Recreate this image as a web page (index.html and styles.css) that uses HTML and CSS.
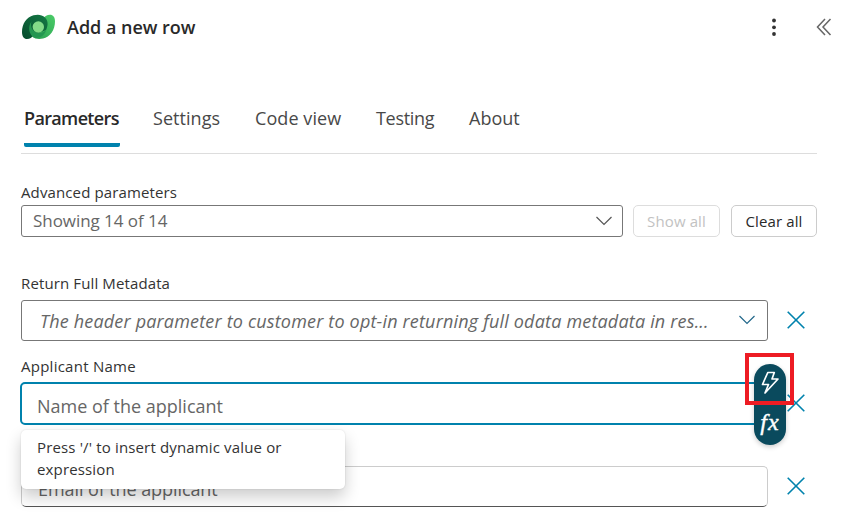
FILE: index.html
```html
<!DOCTYPE html>
<html lang="en">
<head>
<meta charset="utf-8">
<title>Add a new row</title>
<link rel="stylesheet" href="styles.css">
</head>
<body>
<main class="panel">
  <header class="header">
    <svg class="logo" width="34" height="26" viewBox="0 0 34 26">
      <defs>
        <linearGradient id="dark" x1="0" y1="1" x2="1" y2="0"><stop offset="0" stop-color="#064b2d"/><stop offset="1" stop-color="#157a45"/></linearGradient>
        <linearGradient id="light" x1="0" y1="1" x2="1" y2="0"><stop offset="0" stop-color="#289d50"/><stop offset="1" stop-color="#4bcc68"/></linearGradient>
      </defs>
      <path fill="url(#light)" d="M11 22.500C14 25 18 25.500 22 24.500C29 23 34 16 34 7.500C34 3 32 .8 29 .8C26 .8 24 2 22.500 4.500L23 13L17 18Z"/>
      <path fill="url(#dark)" d="M24 3.500C21 .6 17 0 12.500 1.300C5.500 3 1 10 1 18C1 22.500 3 25 6 25C9 25 11 23.500 12.500 21L25 16C27.500 11 27 6.500 24 3.500Z"/>
      <path fill="#249651" d="M10.500 7.500C7 12 7.500 18.500 11.500 22.500C15 26 24 23 25.500 15C24 18 20 19.500 16.500 18.700C11 17.500 9 12 10.500 7.500Z"/>
      <circle cx="17.300" cy="13" r="5.700" fill="#83db88"/>
    </svg>
    <h1 class="title">Add a new row</h1>
    <svg class="more" width="6" height="20" viewBox="0 0 6 20" fill="#333"><circle cx="3" cy="3.500" r="1.900"/><circle cx="3" cy="10.300" r="1.900"/><circle cx="3" cy="17" r="1.900"/></svg>
    <svg class="collapse" width="16" height="18" viewBox="0 0 16 18" fill="none" stroke="#666" stroke-width="1.500"><path d="M9 1L1.500 9L9 17M14.500 1L7 9L14.500 17"/></svg>
  </header>

  <nav class="tabs">
    <a class="tab active">Parameters</a>
    <a class="tab settings">Settings</a>
    <a class="tab code">Code view</a>
    <a class="tab testing">Testing</a>
    <a class="tab about">About</a>
  </nav>

  <section class="advanced">
    <div class="label label-advanced">Advanced parameters</div>
    <div class="row">
      <div class="select"><span class="showing">Showing 14 of 14</span>
        <svg width="16" height="10" viewBox="0 0 16 10" fill="none" stroke="#555" stroke-width="1.200"><path d="M.5 1L8 8.500L15.500 1"/></svg>
      </div>
      <button class="button disabled" disabled>Show all</button>
      <button class="button clear">Clear all</button>
    </div>
  </section>

  <section class="field metadata">
    <div class="label label-metadata">Return Full Metadata</div>
    <div class="row">
      <div class="box combo"><span class="hint">The header parameter to customer to opt-in returning full odata metadata in res...</span>
        <svg width="16" height="10" viewBox="0 0 16 10" fill="none" stroke="#22678a" stroke-width="1.200"><path d="M.5 1L8 8.500L15.500 1"/></svg>
      </div>
      <svg class="remove" width="18" height="18" viewBox="0 0 18 18"><path d="M.7.7L17.300 17.300M17.300.7L.7 17.300"/></svg>
    </div>
  </section>

  <section class="field applicant">
    <div class="label label-name">Applicant Name</div>
    <div class="row">
      <div class="box focused"><span class="name">Name of the applicant</span></div>
      <svg class="remove" width="18" height="18" viewBox="0 0 18 18"><path d="M.7.7L17.300 17.300M17.300.7L.7 17.300"/></svg>
    </div>
    <div class="tooltip"><span class="line-one">Press '/' to insert dynamic value or</span><br><span class="line-two">expression</span></div>
    <div class="tools">
      <svg class="bolt" width="18" height="24" viewBox="0 0 18 24" fill="none" stroke="#fff" stroke-width="1.700" stroke-linejoin="round"><path d="M6.800 1.500H13.300L11 8H17L4 22L7.500 13.500H1.500Z"/></svg>
      <span class="fx">fx</span>
    </div>
    <div class="highlight"></div>
  </section>

  <section class="field email">
    <div class="row">
      <div class="box input"><span class="mail">Email of the applicant</span></div>
      <svg class="remove" width="18" height="18" viewBox="0 0 18 18"><path d="M.7.7L17.300 17.300M17.300.7L.7 17.300"/></svg>
    </div>
  </section>
</main>
</body>
</html>
```
FILE: styles.css
```css
* { box-sizing: border-box; }
body { margin: 0; background: #fff; color: #333; font-family: "Open Sans", "Noto Sans", sans-serif; overflow: hidden; }
svg { display: block; flex: none; }
span { white-space: nowrap; }
.panel { width: 853px; height: 516px; padding: 0 36px 0 21px; overflow: hidden; }
.header { display: flex; align-items: center; height: 54px; margin-right: -15px; }
.title { margin: 0 0 0 12px; font-size: 18px; line-height: 24px; font-weight: 600; color: #292929; letter-spacing: -.02px; }
.more { margin-left: auto; }
.collapse { margin-left: 39px; }
.tabs { display: flex; gap: 33px; height: 60px; margin-top: 40px; padding: 0 3px; border-bottom: 1px solid #ddd; }
.tab { position: relative; height: 53px; padding-top: 12px; font-size: 18px; line-height: 24px; color: #484848; white-space: nowrap; }
.active { width: 96px; font-weight: 600; letter-spacing: -.65px; color: #292929; border-bottom: 4px solid #0082ad; border-radius: 2px; }
.settings { width: 69px; letter-spacing: .05px; }
.code { width: 88px; letter-spacing: .08px; }
.testing { width: 60px; letter-spacing: -.3px; }
.label { font-size: 15px; line-height: 20px; color: #333; white-space: nowrap; letter-spacing: .12px; }
.label-name { letter-spacing: .25px; }
.advanced { padding-top: 28px; height: 84px; }
.row { display: flex; align-items: center; }
.advanced .label { height: 23px; }
.select { display: flex; align-items: center; justify-content: space-between; width: 602px; height: 32px; padding: 0 10px 0 11px; border: 1px solid #777; border-radius: 3px; color: #666; font-size: 17px; }
.showing { margin-top: -2px; letter-spacing: -.05px; }
.button { width: 87px; height: 32px; margin: 0 0 0 10px; padding: 0; background: #fff; border: 1px solid #ccc; border-radius: 5px; font: 15px "Open Sans", sans-serif; color: #292929; letter-spacing: .12px; }
.disabled { color: #c2c2c2; border-color: #ddd; }
.clear { width: 86px; margin-left: 11px; }
.field { position: relative; }
.metadata { padding-top: 35px; height: 118px; }
.metadata .label { height: 27px; }
.box { display: flex; align-items: center; width: 747px; height: 41px; border: 1px solid #777; border-radius: 3px; font-size: 18px; color: #666; }
.combo { justify-content: space-between; padding: 0 12px 0 18px; }
.combo svg { margin-top: -2px; }
.hint { font-style: italic; letter-spacing: .18px; }
.remove { margin: -1px 0 0 18.5px; fill: none; stroke: #0082ad; stroke-width: 1.600; }
.applicant { height: 110px; z-index: 1; }
.applicant .label { height: 26px; }
.focused { width: 748px; height: 43px; margin-left: -1px; padding: 5px 0 0 15px; border: 2px solid #0082ad; border-radius: 5px; }
.mail { letter-spacing: -.08px; }
.tooltip { position: absolute; left: 0; top: 74px; width: 324px; height: 59px; padding: 6px 16px; background: #fff; border-radius: 5px; box-shadow: 0 0 2px #0002, 0 8px 16px #0003; font-size: 15px; line-height: 22px; letter-spacing: .15px; color: #333; }
.tools { position: absolute; left: 733px; top: 8px; width: 32px; height: 81px; padding-top: 7px; display: flex; flex-direction: column; align-items: center; border-radius: 16px; background: #0a4a5d; box-shadow: 0 2px 5px #0003; }
.fx { height: 34px; margin-top: 14px; color: #fff; font: italic 24px/26px "Liberation Serif", serif; letter-spacing: 1px; -webkit-text-stroke: .4px #fff; }
.highlight { position: absolute; left: 724px; top: -3px; width: 49px; height: 52px; border: 4px solid #ed1c24; }
.input { padding: 5px 0 0 16px; border-color: #ccc #ccc #555; border-radius: 5px; }
```
